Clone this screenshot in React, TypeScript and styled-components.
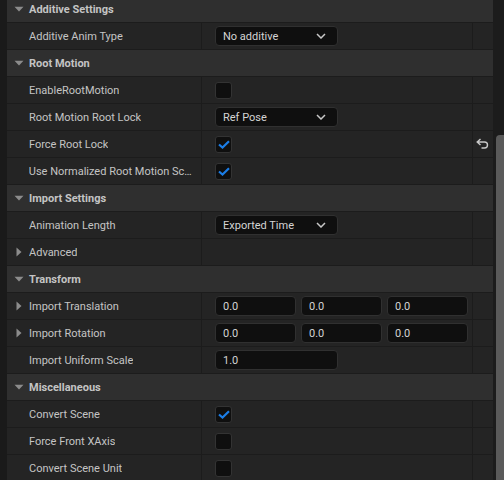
import * as React from 'react';
import styled, { createGlobalStyle } from 'styled-components';

const GlobalStyle = createGlobalStyle`
  html, body {
    margin: 0;
    padding: 0;
    background: #1a1a1a;
    overflow: hidden;
  }
  body {
    font-family: Roboto, "Noto Sans", sans-serif;
    font-size: 11px;
    color: #c4c4c4;
  }
`;

type Value =
  | { kind: 'combo'; text: string }
  | { kind: 'check'; checked: boolean }
  | { kind: 'vector'; values: string[] }
  | { kind: 'number'; text: string }
  | { kind: 'none' };

type Item =
  | { type: 'header'; label: string }
  | { type: 'prop'; label: string; value: Value; expandable?: boolean; reset?: boolean };

const items: Item[] = [
  { type: 'header', label: 'Additive Settings' },
  { type: 'prop', label: 'Additive Anim Type', value: { kind: 'combo', text: 'No additive' } },
  { type: 'header', label: 'Root Motion' },
  { type: 'prop', label: 'EnableRootMotion', value: { kind: 'check', checked: false } },
  { type: 'prop', label: 'Root Motion Root Lock', value: { kind: 'combo', text: 'Ref Pose' } },
  { type: 'prop', label: 'Force Root Lock', value: { kind: 'check', checked: true }, reset: true },
  { type: 'prop', label: 'Use Normalized Root Motion Scale', value: { kind: 'check', checked: true } },
  { type: 'header', label: 'Import Settings' },
  { type: 'prop', label: 'Animation Length', value: { kind: 'combo', text: 'Exported Time' } },
  { type: 'prop', label: 'Advanced', value: { kind: 'none' }, expandable: true },
  { type: 'header', label: 'Transform' },
  { type: 'prop', label: 'Import Translation', value: { kind: 'vector', values: ['0.0', '0.0', '0.0'] }, expandable: true },
  { type: 'prop', label: 'Import Rotation', value: { kind: 'vector', values: ['0.0', '0.0', '0.0'] }, expandable: true },
  { type: 'prop', label: 'Import Uniform Scale', value: { kind: 'number', text: '1.0' } },
  { type: 'header', label: 'Miscellaneous' },
  { type: 'prop', label: 'Convert Scene', value: { kind: 'check', checked: true } },
  { type: 'prop', label: 'Force Front XAxis', value: { kind: 'check', checked: false } },
  { type: 'prop', label: 'Convert Scene Unit', value: { kind: 'check', checked: false } },
];

const Panel = styled.div`
  display: flex;
  height: 480px;
  overflow: hidden;
`;

const List = styled.div`
  width: 486px;
  padding-left: 7px;
  overflow: hidden;
`;

const Inner = styled.div`
  margin-top: -4px;
`;

const HeaderRow = styled.div`
  display: flex;
  align-items: center;
  height: 26px;
  background: #2f2f2f;
  border-bottom: 1px solid #1c1c1c;
  font-weight: 700;
  color: #c4c4c4;
`;

const ArrowSlot = styled.div`
  width: 22px;
  display: flex;
  justify-content: center;
  padding-left: 2px;
  box-sizing: border-box;
`;

const PropRow = styled.div`
  display: grid;
  grid-template-columns: 195px 271px 20px;
  height: 26px;
  background: #242424;
  border-bottom: 1px solid #1c1c1c;
`;

const NameCell = styled.div`
  display: flex;
  align-items: center;
  border-right: 1px solid #1c1c1c;
  min-width: 0;
  padding-right: 4px;
`;

const NameText = styled.span`
  white-space: nowrap;
  overflow: hidden;
  text-overflow: ellipsis;
`;

const ValueCell = styled.div`
  display: flex;
  align-items: center;
  gap: 5px;
  padding-left: 13px;
  border-right: 1px solid #1c1c1c;
`;

const ResetCell = styled.div`
  display: flex;
  align-items: center;
  justify-content: center;
  padding-right: 2px;
`;

const Field = styled.div<{ $width: number }>`
  box-sizing: border-box;
  width: ${p => p.$width}px;
  height: 20px;
  display: flex;
  align-items: center;
  justify-content: space-between;
  padding: 0 11px 0 7px;
  background: #0f0f0f;
  border: 1px solid #303030;
  border-radius: 4px;
  color: #d4d4d4;
`;

const CheckBox = styled.div`
  box-sizing: border-box;
  width: 17px;
  height: 17px;
  display: flex;
  align-items: center;
  justify-content: center;
  background: #0f0f0f;
  border: 1px solid #333;
  border-radius: 3px;
`;

const ScrollTrack = styled.div`
  flex: 1;
  display: flex;
  flex-direction: column;
  padding: 135px 0 0 3px;
  background: #1c1c1c;
`;

const ScrollThumb = styled.div`
  flex: 1;
  background: #5a5a5a;
  border-radius: 4px 0 0 0;
`;

const DownArrow = () => (
  <svg width="10" height="6" viewBox="0 0 10 6">
    <path d="M0.5 0.8 H9.5 L5 5.5 Z" fill="#8c8c8c" />
  </svg>
);

const RightArrow = () => (
  <svg width="6" height="10" viewBox="0 0 6 10">
    <path d="M0.5 0.5 V9.5 L5.5 5 Z" fill="#8c8c8c" />
  </svg>
);

const Chevron = () => (
  <svg width="10" height="6" viewBox="0 0 10 6">
    <path d="M1 1 L5 5 L9 1" fill="none" stroke="#c8c8c8" strokeWidth="1.5" />
  </svg>
);

const Tick = () => (
  <svg width="12" height="9" viewBox="0 0 12 9">
    <path d="M1 4.5 L4.5 7.5 L11 1.2" fill="none" stroke="#1b7de6" strokeWidth="2.2" />
  </svg>
);

const ResetIcon = () => (
  <svg width="13" height="12" viewBox="0 0 13 12">
    <path
      d="M4.5 1 L1.2 4 L4.5 7 M1.2 4 H8.5 A3 3 0 0 1 8.5 10 H5.5"
      fill="none"
      stroke="#c8c8c8"
      strokeWidth="1.4"
    />
  </svg>
);

const renderValue = (value: Value) => {
  switch (value.kind) {
    case 'combo':
      return (
        <Field $width={123}>
          <span>{value.text}</span>
          <Chevron />
        </Field>
      );
    case 'check':
      return <CheckBox>{value.checked && <Tick />}</CheckBox>;
    case 'vector':
      return value.values.map((v, i) => (
        <Field key={i} $width={81}>
          <span>{v}</span>
        </Field>
      ));
    case 'number':
      return (
        <Field $width={123}>
          <span>{value.text}</span>
        </Field>
      );
    default:
      return null;
  }
};

export default function App() {
  return (
    <>
      <GlobalStyle />
      <Panel>
        <List>
          <Inner>
            {items.map((item, i) =>
              item.type === 'header' ? (
                <HeaderRow key={i}>
                  <ArrowSlot>
                    <DownArrow />
                  </ArrowSlot>
                  {item.label}
                </HeaderRow>
              ) : (
                <PropRow key={i}>
                  <NameCell>
                    <ArrowSlot>{item.expandable && <RightArrow />}</ArrowSlot>
                    <NameText>{item.label}</NameText>
                  </NameCell>
                  <ValueCell>{renderValue(item.value)}</ValueCell>
                  <ResetCell>{item.reset && <ResetIcon />}</ResetCell>
                </PropRow>
              )
            )}
          </Inner>
        </List>
        <ScrollTrack>
          <ScrollThumb />
        </ScrollTrack>
      </Panel>
    </>
  );
}
